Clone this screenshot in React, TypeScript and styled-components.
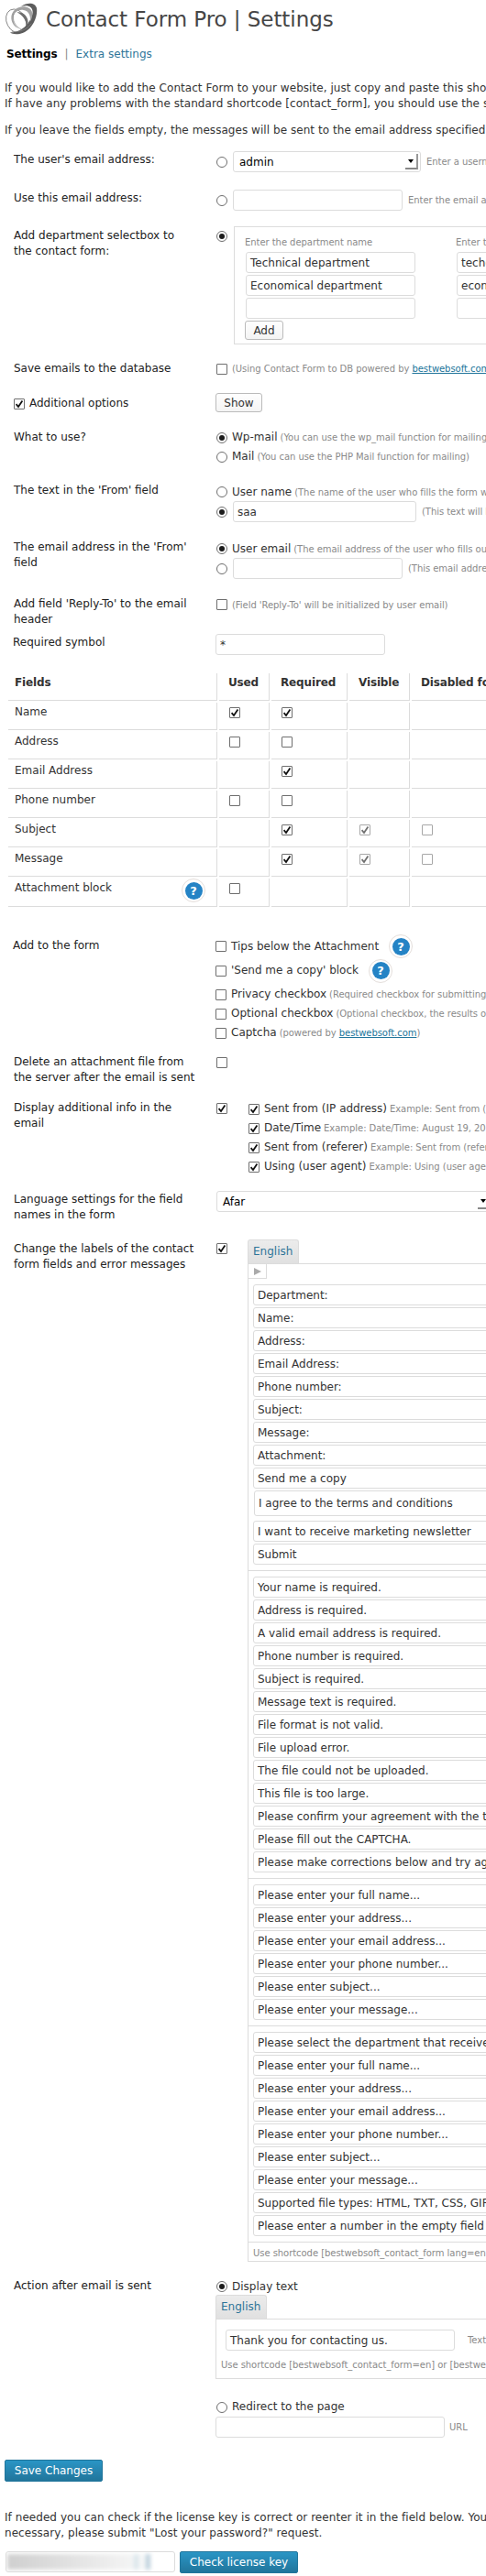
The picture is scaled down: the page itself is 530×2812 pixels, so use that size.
import React from 'react';
import styled, { createGlobalStyle } from 'styled-components';

const Global = createGlobalStyle`
  html, body { margin: 0; background: #fff; overflow-x: hidden; }
  body { font: 12px/17px "DejaVu Sans", sans-serif; color: #333; }
  * { box-sizing: border-box; }
`;

const Page = styled.main`
  width: 530px;
  height: 2812px;
  overflow: hidden;
  white-space: nowrap;
`;
const Header = styled.header`
  display: flex;
  align-items: center;
  height: 43px;
  padding: 0 0 1px 5px;
  gap: 7px;
`;
const Title = styled.h1`
  margin: 0;
  font-size: 23px;
  line-height: 30px;
  font-weight: 400;
  letter-spacing: -0.06px;
  color: #464646;
`;
const Tabs = styled.nav`
  display: flex;
  gap: 8px;
  height: 36px;
  padding: 8px 0 0 7px;
  color: #888;
  b { color: #000; font-size: 12px; letter-spacing: -0.15px; }
  a { color: #2e7599; }
`;
const Intro = styled.p<{ $h: number; $pad?: number }>`
  margin: 0;
  padding: ${(p) => p.$pad ?? 0}px 0 0 5px;
  height: ${(p) => p.$h}px;
  letter-spacing: 0.05px;
`;
const Row = styled.div<{ $h: number }>`
  display: grid;
  grid-template-columns: 235px 1fr;
  height: ${(p) => p.$h}px;
`;
const Label = styled.div<{ $top?: number; $left?: number }>`
  padding: ${(p) => p.$top ?? 0}px 0 0 ${(p) => p.$left ?? 15}px;
  color: #222;
`;
const CheckLabel = styled(Label)`
  display: flex;
  align-items: center;
  gap: 5px;
  height: 23px;
`;
const Field = styled.div<{ $top?: number }>`
  padding-top: ${(p) => p.$top ?? 0}px;
  min-width: 0;
`;
const Line = styled.div<{ $h?: number; $gap?: number; $left?: number }>`
  display: flex;
  align-items: center;
  gap: ${(p) => p.$gap ?? 5}px;
  height: ${(p) => p.$h ?? 21}px;
  padding-left: ${(p) => p.$left ?? 1}px;
`;
const Split = styled.div`
  display: flex;
  align-items: flex-start;
`;
const Note = styled.span<{ $ml?: number }>`
  font-size: 10px;
  letter-spacing: -0.05px;
  color: #8a8a8a;
  margin-left: ${(p) => p.$ml ?? 0}px;
  a { color: #21759b; text-decoration: underline; }
`;
const Tail = styled(Note)`
  margin-left: -2px;
`;
const Input = styled.div<{ $w: number; $h?: number; $ml?: number; $mt?: number }>`
  flex: none;
  width: ${(p) => p.$w}px;
  height: ${(p) => p.$h ?? 23}px;
  line-height: ${(p) => (p.$h ?? 23) - 3}px;
  margin: ${(p) => p.$mt ?? 0}px 0 0 ${(p) => p.$ml ?? 0}px;
  padding: 1px 0 0 4px;
  border: 1px solid #dcdcdc;
  border-radius: 3px;
  background: #fff;
  overflow: hidden;
`;
const SelectBox = styled(Input)`
  display: flex;
  align-items: center;
  justify-content: space-between;
  padding: 0 2px 0 6px;
  color: #000;
`;
const SelectArrow = styled.span`
  display: flex;
  align-items: center;
  justify-content: center;
  width: 14px;
  height: 17px;
  border-right: 2px solid #999;
  border-bottom: 2px solid #888;
  &::before {
    content: '';
    border: 3px solid transparent;
    border-top: 4px solid #000;
    border-bottom: 0;
  }
`;
const Button = styled.button<{ $w: number; $primary?: boolean }>`
  flex: none;
  width: ${(p) => p.$w}px;
  height: ${(p) => (p.$primary ? 24 : 21)}px;
  padding: ${(p) => (p.$primary ? 1 : 2)}px 0 0;
  font: 12px/17px "DejaVu Sans", sans-serif;
  border-radius: ${(p) => (p.$primary ? 2 : 3)}px;
  border: 1px solid ${(p) => (p.$primary ? '#21759b' : '#bbb')};
  background: ${(p) => (p.$primary ? 'linear-gradient(#2a95c5, #21759b)' : 'linear-gradient(#fefefe, #f4f4f4)')};
  color: ${(p) => (p.$primary ? '#fff' : '#333')};
`;
const CheckShape = styled.span<{ $round?: boolean; $dim?: boolean }>`
  flex: none;
  display: inline-flex;
  align-items: center;
  justify-content: center;
  width: 12px;
  height: 12px;
  border: 1px solid #6e6e6e;
  border-radius: ${(p) => (p.$round ? '50%' : '1px')};
  background: #fff;
  opacity: ${(p) => (p.$dim ? 0.6 : 1)};
`;
const Dot = styled.i`
  width: 6px;
  height: 6px;
  border-radius: 50%;
  background: #1c1c1c;
`;

const Check = ({ on, dim }: { on?: boolean; dim?: boolean }) => (
  <CheckShape $dim={dim}>
    {on && (
      <svg width="10" height="10" viewBox="0 0 10 10">
        <path d="M1.6 5.2L4 8L8.4 1.6" fill="none" stroke="#111" strokeWidth="1.8" />
      </svg>
    )}
  </CheckShape>
);
const Radio = ({ on }: { on?: boolean }) => <CheckShape $round>{on && <Dot />}</CheckShape>;

const HelpRing = styled.span<{ $ml?: number }>`
  flex: none;
  display: inline-flex;
  align-items: center;
  justify-content: center;
  width: 26px;
  height: 26px;
  margin-left: ${(p) => p.$ml ?? 0}px;
  border: 1px solid #e4dedb;
  border-radius: 50%;
`;
const HelpDisc = styled.span`
  width: 19px;
  height: 19px;
  border-radius: 50%;
  background: #2483c5;
  color: #fff;
  font: bold 13px/19px "DejaVu Sans", sans-serif;
  text-align: center;
`;
const Help = ({ ml }: { ml?: number }) => (
  <HelpRing $ml={ml}>
    <HelpDisc>?</HelpDisc>
  </HelpRing>
);

const DeptBox = styled.div`
  display: grid;
  grid-template-columns: 230px 200px;
  flex: none;
  width: 500px;
  height: 129px;
  margin-left: 7px;
  padding: 8px 0 0 11px;
  border: 1px solid #dcdcdc;
`;
const DeptColumn = styled.div`
  display: flex;
  flex-direction: column;
  align-items: flex-start;
  gap: 2px;
`;
const DeptNote = styled(Note)`
  line-height: 17px;
`;

const Matrix = styled.div`
  display: grid;
  grid-template-columns: 228px 55px 83px 66px 200px;
  grid-template-rows: 30px repeat(6, 30px) 31px;
  gap: 2px;
  height: 287px;
  padding-left: 9px;
`;
const Cell = styled.div<{ $head?: boolean }>`
  display: flex;
  align-items: flex-start;
  justify-content: space-between;
  padding: 2px 12px 0 ${(p) => (p.$head ? 10 : 11)}px;
  border-right: 1px solid #dcdcdc;
  border-bottom: 1px solid #dcdcdc;
  font-weight: ${(p) => (p.$head ? 700 : 400)};
  letter-spacing: ${(p) => (p.$head ? -0.15 : 0)}px;
  ${CheckShape} { margin-top: 3px; }
  ${HelpRing} { margin-top: -2px; }
  &:nth-child(5n + 1) { padding-left: 7px; }
`;

const LangTab = styled.div`
  width: 56px;
  height: 26px;
  border: 1px solid #dcdcdc;
  border-bottom: 0;
  border-radius: 3px 3px 0 0;
  background: linear-gradient(#ececec, #e0e0e0);
  color: #2e7599;
  line-height: 24px;
  padding-left: 5px;
`;
const Panel = styled.div<{ $h: number }>`
  width: 500px;
  height: ${(p) => p.$h}px;
  border: 1px solid #dcdcdc;
`;
const LabelsBlock = styled.div`
  padding-left: 22px;
`;
const Pager = styled.div`
  width: 20px;
  height: 16px;
  padding: 4px 0 0 6px;
  border: solid #dcdcdc;
  border-width: 0 1px 1px 0;
  svg { display: block; }
`;
const Stack = styled.div`
  display: flex;
  flex-direction: column;
  gap: 2px;
  padding: 6px 0 6px 5px;
  & + & { border-top: 1px solid #dcdcdc; }
`;
const PanelNote = styled.div`
  height: 22px;
  padding: 3px 0 0 5px;
  border-top: 1px solid #dcdcdc;
  line-height: 17px;
`;
const RedirectGroup = styled.div`
  padding-top: 20px;
`;
const SaveBar = styled.div`
  height: 54px;
  padding-left: 5px;
`;
const Footer = styled.div`
  display: flex;
  gap: 5px;
  padding: 0 0 0 6px;
`;
const Smudge = styled.div`
  display: flex;
  width: 156px;
  height: 17px;
  margin: 1px 0 0 -3px;
  background: linear-gradient(90deg, #cfcfcf, #e2e2e2 45%, #f1f1f1 80%, #f6f8f9);
  filter: blur(2px);
`;
const Streak = styled.i<{ $ml: number; $c: string }>`
  width: 5px;
  margin-left: ${(p) => p.$ml}px;
  background: ${(p) => p.$c};
`;

const Logo = () => (
  <svg width="38" height="36" viewBox="0 0 114 108">
    <ellipse cx="38" cy="60" rx="31" ry="41" transform="rotate(-28 38 60)" fill="#fff" stroke="#777" strokeWidth="2.4" />
    <path
      fillRule="evenodd"
      fill="#5c5c5c"
      d="M54 12C76 -4 101 0 105 17C109 44 94 80 66 96C50 104 28 106 18 97C38 98 60 88 76 68C92 46 97 26 86 16C78 9 66 9 54 12Z"
    />
    <path
      fillRule="evenodd"
      fill="#a2a2a2"
      d="M22 52C20 26 44 10 66 13C90 16 98 36 84 62C86 40 78 27 62 24C44 21 30 32 28 50C28 64 34 76 46 84C32 80 24 68 22 52Z"
    />
    <path d="M40 31C58 28 72 40 76 56C78 66 76 72 72 76C70 56 58 40 40 31Z" fill="#6e6e6e" />
    <path d="M30 36C24 56 34 78 56 88M24 94C52 98 74 86 88 68" fill="none" stroke="#888" strokeWidth="2" />
  </svg>
);

const Fields = ({ items }: { items: string[] }) => (
  <>
    {items.map((t, i) => (
      <Input key={i} $w={400}>{t}</Input>
    ))}
  </>
);

const labels = ['Department:', 'Name:', 'Address:', 'Email Address:', 'Phone number:', 'Subject:', 'Message:', 'Attachment:', 'Send me a copy'];
const errors = [
  'Your name is required.', 'Address is required.', 'A valid email address is required.', 'Phone number is required.',
  'Subject is required.', 'Message text is required.', 'File format is not valid.', 'File upload error.',
  'The file could not be uploaded.', 'This file is too large.', 'Please confirm your agreement with the t',
  'Please fill out the CAPTCHA.', 'Please make corrections below and try ag',
];
const hints = [
  'Please enter your full name...', 'Please enter your address...', 'Please enter your email address...',
  'Please enter your phone number...', 'Please enter subject...', 'Please enter your message...',
];
const tips = ['Please select the department that receive', ...hints, 'Supported file types: HTML, TXT, CSS, GIF', 'Please enter a number in the empty field'];

// One entry per column: '' is blank, 0 unchecked, 1 checked, 2 disabled checked, 3 disabled unchecked
const matrix: [string, ...(number | '')[]][] = [
  ['Name', 1, 1, '', ''],
  ['Address', 0, 0, '', ''],
  ['Email Address', '', 1, '', ''],
  ['Phone number', 0, 0, '', ''],
  ['Subject', '', 1, 2, 3],
  ['Message', '', 1, 2, 3],
  ['Attachment block', 0, '', '', ''],
];

export default function App() {
  return (
    <Page>
      <Global />
      <Header>
        <Logo />
        <Title>Contact Form Pro | Settings</Title>
      </Header>
      <Tabs><b>Settings</b><span>|</span><a>Extra settings</a></Tabs>
      <Intro $h={55} $pad={9}>
        If you would like to add the Contact Form to your website, just copy and paste this sho<br />
        If have any problems with the standard shortcode [contact_form], you should use the s
      </Intro>
      <Intro $h={31}>If you leave the fields empty, the messages will be sent to the email address specified d</Intro>

      <Row $h={42}>
        <Label $top={1}>The user's email address:</Label>
        <Field>
          <Line $h={23} $gap={6}><Radio /><SelectBox $w={205}>admin<SelectArrow /></SelectBox><Note>Enter a userna</Note></Line>
        </Field>
      </Row>
      <Row $h={40}>
        <Label $top={1}>Use this email address:</Label>
        <Field>
          <Line $h={23} $gap={6}><Radio /><Input $w={185} /><Note>Enter the email ad</Note></Line>
        </Field>
      </Row>
      <Row $h={143}>
        <Label $top={2}>Add department selectbox to<br />the contact form:</Label>
        <Split>
          <Line $h={22}><Radio on /></Line>
          <DeptBox>
            <DeptColumn>
              <DeptNote>Enter the department name</DeptNote>
              <Input $w={185} $ml={1}>Technical department</Input>
              <Input $w={185} $ml={1}>Economical department</Input>
              <Input $w={185} $ml={1} />
              <Button $w={42}>Add</Button>
            </DeptColumn>
            <DeptColumn>
              <DeptNote>Enter th</DeptNote>
              <Input $w={185} $ml={1}>tech@</Input>
              <Input $w={185} $ml={1}>econo</Input>
              <Input $w={185} $ml={1} />
            </DeptColumn>
          </DeptBox>
        </Split>
      </Row>
      <Row $h={39}>
        <Label $top={4}>Save emails to the database</Label>
        <Field $top={2}>
          <Line><Check /><Note>(Using Contact Form to DB powered by <a>bestwebsoft.com</a>)</Note></Line>
        </Field>
      </Row>
      <Row $h={38}>
        <CheckLabel><Check on />Additional options</CheckLabel>
        <Field><Button $w={51}>Show</Button></Field>
      </Row>
      <Row $h={60}>
        <Label $top={2}>What to use?</Label>
        <Field>
          <Line><Radio on />Wp-mail <Tail>(You can use the wp_mail function for mailing)</Tail></Line>
          <Line><Radio />Mail <Tail>(You can use the PHP Mail function for mailing)</Tail></Line>
        </Field>
      </Row>
      <Row $h={62}>
        <Label>The text in the 'From' field</Label>
        <Field>
          <Line $h={20}><Radio />User name <Tail>(The name of the user who fills the form wi</Tail></Line>
          <Line $h={23} $gap={6}><Radio on /><Input $w={200}>saa</Input><Note>(This text will b</Note></Line>
        </Field>
      </Row>
      <Row $h={62}>
        <Label>The email address in the 'From'<br />field</Label>
        <Field>
          <Line $h={20}><Radio on />User email <Tail>(The email address of the user who fills out</Tail></Line>
          <Line $h={23} $gap={6}><Radio /><Input $w={185} /><Note>(This email addres</Note></Line>
        </Field>
      </Row>
      <Row $h={41}>
        <Label>Add field 'Reply-To' to the email<br />header</Label>
        <Field><Line $h={18}><Check /><Note>(Field 'Reply-To' will be initialized by user email)</Note></Line></Field>
      </Row>
      <Row $h={43}>
        <Label $top={1} $left={14}>Required symbol</Label>
        <Field><Input $w={185}>*</Input></Field>
      </Row>

      <Matrix>
        {['Fields', 'Used', 'Required', 'Visible', 'Disabled for'].map((t) => (
          <Cell key={t} $head>{t}</Cell>
        ))}
        {matrix.flatMap(([name, ...cols]) => [
          <Cell key={name}>{name}{name === 'Attachment block' && <Help />}</Cell>,
          ...cols.map((v, i) => (
            <Cell key={name + i}>{v !== '' && <Check on={v === 1 || v === 2} dim={v > 1} />}</Cell>
          )),
        ])}
      </Matrix>

      <Row $h={129}>
        <Label $top={2} $left={14}>Add to the form</Label>
        <Field>
          <Line $h={22} $left={0}><Check />Tips below the Attachment <Help ml={6} /></Line>
          <Line $h={31} $left={0}><Check />'Send me a copy' block <Help ml={6} /></Line>
          <Line $left={0}><Check />Privacy checkbox <Tail>(Required checkbox for submitting</Tail></Line>
          <Line $left={0}><Check />Optional checkbox <Tail>(Optional checkbox, the results of</Tail></Line>
          <Line $left={0}><Check />Captcha <Tail>(powered by <a>bestwebsoft.com</a>)</Tail></Line>
        </Field>
      </Row>
      <Row $h={49}>
        <Label>Delete an attachment file from<br />the server after the email is sent</Label>
        <Field><Line $h={18}><Check /></Line></Field>
      </Row>
      <Row $h={100}>
        <Label $top={1}>Display additional info in the<br />email</Label>
        <Split>
          <Line $h={20}><Check on /></Line>
          <Field>
            <Line $left={23}><Check on />Sent from (IP address) <Tail>Example: Sent from (</Tail></Line>
            <Line $left={23}><Check on />Date/Time <Tail>Example: Date/Time: August 19, 2014</Tail></Line>
            <Line $left={23}><Check on />Sent from (referer) <Tail>Example: Sent from (refer</Tail></Line>
            <Line $left={23}><Check on />Using (user agent) <Tail>Example: Using (user agen</Tail></Line>
          </Field>
        </Split>
      </Row>
      <Row $h={53}>
        <Label $top={1}>Language settings for the field<br />names in the form</Label>
        <Field><SelectBox $w={302} $ml={1}>Afar<SelectArrow /></SelectBox></Field>
      </Row>
      <Row $h={1134}>
        <Label $top={2}>Change the labels of the contact<br />form fields and error messages</Label>
        <Split>
          <Line $h={20}><Check on /></Line>
          <LabelsBlock>
            <LangTab>English</LangTab>
            <Panel $h={1090}>
              <Pager><svg width="8" height="8"><path d="M0 0L8 4L0 8Z" fill="#aaa" /></svg></Pager>
              <Stack>
                <Fields items={labels} />
                <Input $w={400} $h={28} $ml={1}>I agree to the terms and conditions</Input>
                <Input $w={400} $mt={3}>I want to receive marketing newsletter</Input>
                <Input $w={400}>Submit</Input>
              </Stack>
              <Stack><Fields items={errors} /></Stack>
              <Stack><Fields items={hints} /></Stack>
              <Stack><Fields items={tips} /></Stack>
              <PanelNote><Note>Use shortcode [bestwebsoft_contact_form lang=en]</Note></PanelNote>
            </Panel>
          </LabelsBlock>
        </Split>
      </Row>
      <Row $h={198}>
        <Label>Action after email is sent</Label>
        <Field>
          <Line $h={18}><Radio on />Display text</Line>
          <LangTab>English</LangTab>
          <Panel $h={66}>
            <Line $h={45} $left={10} $gap={14}><Input $w={250}>Thank you for contacting us.</Input><Note>Text</Note></Line>
            <Line $h={8} $left={5}><Note>Use shortcode [bestwebsoft_contact_form=en] or [bestweb</Note></Line>
          </Panel>
          <RedirectGroup>
            <Line><Radio />Redirect to the page</Line>
            <Line $h={23} $left={0}><Input $w={250} /><Note>URL</Note></Line>
          </RedirectGroup>
        </Field>
      </Row>

      <SaveBar><Button $w={107} $primary>Save Changes</Button></SaveBar>
      <Intro $h={46} $pad={1}>
        If needed you can check if the license key is correct or reenter it in the field below. You<br />
        necessary, please submit "Lost your password?" request.
      </Intro>
      <Footer>
        <Input $w={185}>
          <Smudge><Streak $ml={138} $c="#dbe6ec" /><Streak $ml={8} $c="#bdd0dc" /></Smudge>
        </Input>
        <Button $w={129} $primary>Check license key</Button>
      </Footer>
    </Page>
  );
}
